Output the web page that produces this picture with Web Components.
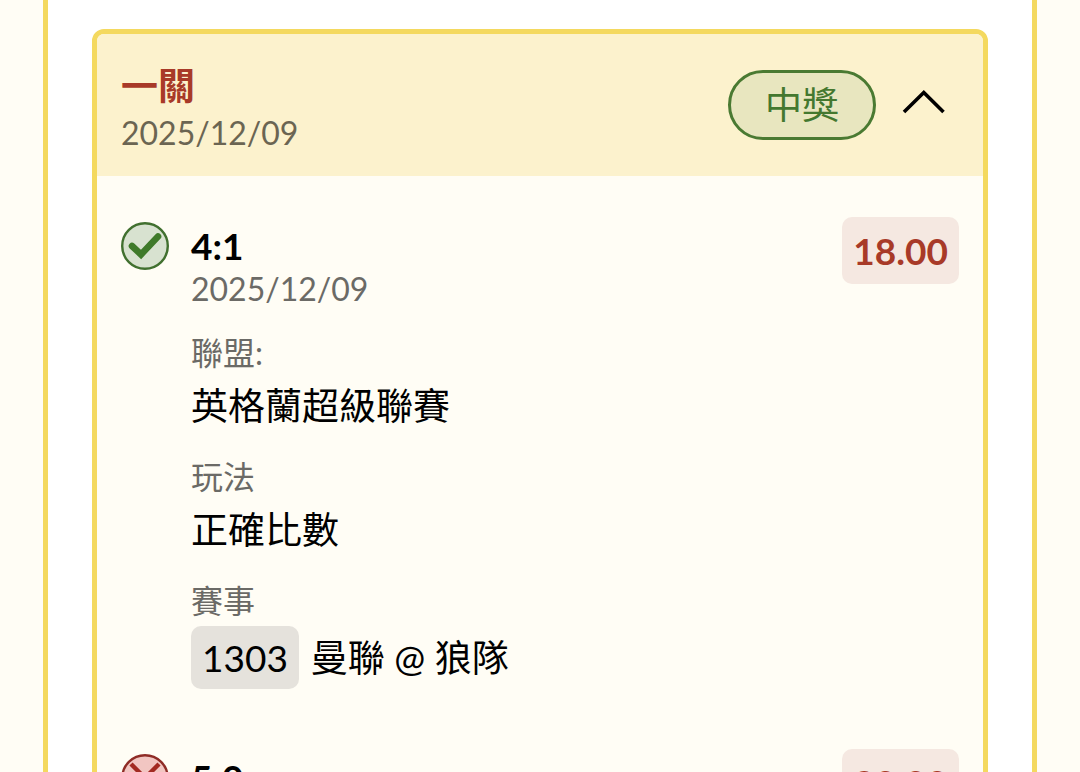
<!DOCTYPE html>
<html lang="zh-Hant">
<head>
<meta charset="utf-8">
<meta name="viewport" content="width=device-width, initial-scale=1">
<title>投注明細</title>
<style>
  body {
    margin: 0;
    background: #fffdf5;
    color: #000;
    font-family: Lato, "Noto Sans CJK TC", sans-serif;
    font-size: 37px;
  }
</style>
</head>
<body>
<ticket-panel>
  <leg-card heading="一關" date="2025/12/09" status="中獎">
    <bet-pick result="win" pick="4:1" date="2025/12/09" odds="18.00">
      <bet-field label="聯盟:">英格蘭超級聯賽</bet-field>
      <bet-field label="玩法">正確比數</bet-field>
      <bet-field label="賽事"><match-code>1303</match-code>曼聯 @ 狼隊</bet-field>
    </bet-pick>
    <bet-pick result="lose" pick="5:0" odds="20.00"></bet-pick>
  </leg-card>
</ticket-panel>

<script>
  const define = (name, render, setup) => {
    customElements.define(name, class extends HTMLElement {
      constructor() {
        super();
        this.attachShadow({ mode: "open" });
      }
      connectedCallback() {
        this.shadowRoot.innerHTML = render(this);
        if (setup) setup(this);
      }
    });
  };
  const attr = (el, name) => el.getAttribute(name) || "";

  define("ticket-panel", () => `
    <style>
      :host {
        display: block;
        margin: 0 43px;
        padding: 29px 44px;
        border: solid #f4d95f;
        border-width: 0 5px;
        background: #fff;
      }
    </style>
    <slot></slot>`);

  define("leg-card", el => `
    <style>
      :host {
        display: block;
        border: 5px solid #f4d95f;
        border-radius: 12px;
        background: #fffdf5;
        overflow: hidden;
      }
      header {
        display: flex;
        align-items: center;
        justify-content: space-between;
        padding: 21px 24px;
        background: #fcf2cd;
      }
      .title { padding-top: 6px; }
      h2 { margin: 0; font-size: 37px; line-height: 50px; font-weight: 700; color: #a83a28; }
      time { display: block; font-size: 32px; line-height: 44px; color: #6b6552; }
      .side { display: flex; align-items: center; gap: 23px; }
      .status {
        padding: 0 34px;
        border: 3px solid #4a7a32;
        border-radius: 35px;
        line-height: 64px;
        color: #44782f;
        background: #e8e6bf;
      }
      button {
        display: flex;
        padding: 0;
        border: 0;
        margin: 0 12px 0 0;
        background: none;
        cursor: pointer;
      }
      button[aria-expanded="false"] svg { transform: rotate(180deg); }
    </style>
    <header>
      <div class="title">
        <h2>${attr(el, "heading")}</h2>
        <time>${attr(el, "date")}</time>
      </div>
      <div class="side">
        <span class="status">${attr(el, "status")}</span>
        <button type="button" aria-expanded="true" aria-controls="picks" aria-label="收合">
          <svg width="48" height="48" viewBox="0 0 48 48" fill="none" stroke="#000" stroke-width="3.600">
            <path d="M5 31 24.800 11.500 44.500 31"/>
          </svg>
        </button>
      </div>
    </header>
    <div id="picks"><slot></slot></div>`,
    el => {
      const button = el.shadowRoot.querySelector("button");
      const picks = el.shadowRoot.querySelector("#picks");
      button.addEventListener("click", () => {
        picks.hidden = !picks.hidden;
        button.setAttribute("aria-expanded", String(!picks.hidden));
      });
    });

  define("result-mark", el => attr(el, "result") === "win" ? `
    <style>:host { display: block; } svg { display: block; }</style>
    <svg width="48" height="48" viewBox="0 0 48 48" fill="none" role="img" aria-label="中">
      <circle cx="24" cy="24" r="22.800" fill="#d8e2d0" stroke="#41702f" stroke-width="2.400"/>
      <path d="M11 24 20 32.500 37 14.500" stroke="#3f7a2a" stroke-width="6.600" stroke-linecap="round"/>
    </svg>` : `
    <style>:host { display: block; } svg { display: block; }</style>
    <svg width="48" height="48" viewBox="0 0 48 48" fill="none" role="img" aria-label="未中">
      <circle cx="24" cy="24" r="22.800" fill="#f2c6c2" stroke="#8f2c26" stroke-width="2.400"/>
      <path d="M10 10 38 38M38 10 10 38" stroke="#a32a22" stroke-width="4.500"/>
    </svg>`);

  define("bet-pick", el => `
    <style>
      :host {
        display: grid;
        grid-template-columns: 48px 1fr auto;
        column-gap: 22px;
        align-items: start;
        padding: 41px 24px 19px;
      }
      result-mark { margin-top: 5px; }
      .detail { display: grid; gap: 22px; padding-top: 8px; }
      h3 { margin: 0; font-size: 37px; line-height: 42px; font-weight: 700; }
      time { display: block; font-size: 32px; line-height: 43px; color: #6b6a66; }
      .odds {
        padding: 0 11px;
        border-radius: 10px;
        line-height: 67px;
        font-weight: 700;
        color: #a83a28;
        background: #f5e8e1;
      }
    </style>
    <result-mark result="${attr(el, "result")}"></result-mark>
    <div class="detail">
      <div>
        <h3>${attr(el, "pick")}</h3>
        ${attr(el, "date") ? `<time>${attr(el, "date")}</time>` : ""}
      </div>
      <slot></slot>
    </div>
    <span class="odds">${attr(el, "odds")}</span>`);

  define("bet-field", el => `
    <style>
      :host { display: grid; gap: 4px; }
      .label { font-size: 32px; line-height: 42px; color: #6b6a66; }
      .value { display: flex; align-items: center; line-height: 56px; }
    </style>
    <div class="label">${attr(el, "label")}</div>
    <div class="value"><slot></slot></div>`);

  define("match-code", () => `
    <style>
      :host {
        display: block;
        margin-right: 12px;
        padding: 0 11px;
        border-radius: 10px;
        line-height: 63px;
        background: #e5e2dc;
      }
    </style>
    <slot></slot>`);
</script>
</body>
</html>
